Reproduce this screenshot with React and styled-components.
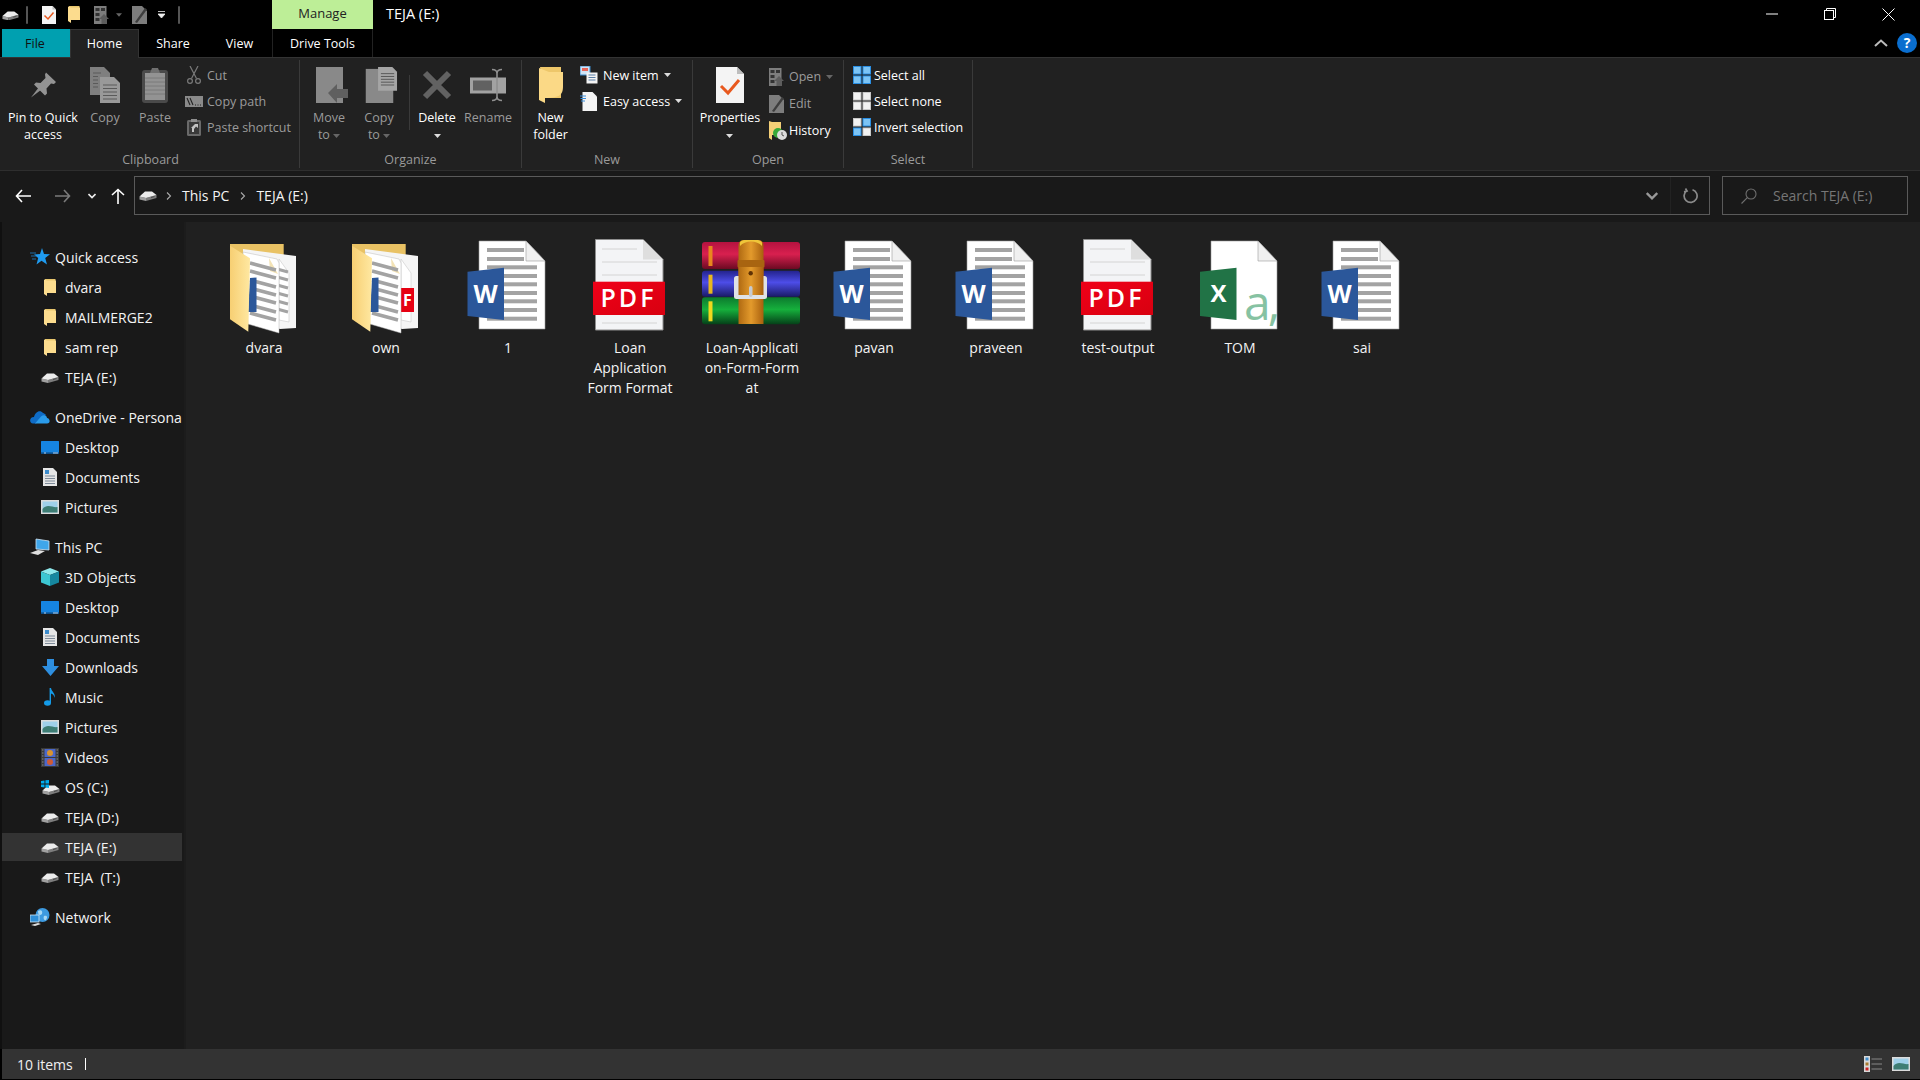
import React from 'react';
import styled, { createGlobalStyle } from 'styled-components';

// === tokens ===
const UI_FONT = '"Open Sans", "Noto Sans", "Liberation Sans", sans-serif';

const GlobalStyle = createGlobalStyle`
  html, body {
    margin: 0;
    padding: 0;
    background: #000;
  }
  * {
    box-sizing: border-box;
  }
  svg {
    display: block;
    flex-shrink: 0;
  }
`;

// === small icons ===
const DriveShape = () => (
  <>
    <path d="M0.5 7.5 L7 9 V12 L0.5 10.5 Z" fill="#a0a0a0" />
    <path d="M7 9 L17.5 6 V9 L7 12 Z" fill="#7d7d7d" />
    <path d="M0.5 7.5 L6 2.5 H13 L17.5 6 L7 9 Z" fill="#ececec" />
    <path d="M12 8.5 L15.5 7.5" stroke="#3c3c3c" strokeWidth="0.8" />
  </>
);

const Drive = ({ w = 18 }) => (
  <svg width={w} height={w * 0.67} viewBox="0 0 18 12">
    <DriveShape />
  </svg>
);

const SmallFolder = ({ w = 12, h = 17 }) => (
  <svg width={w} height={h} viewBox="0 0 12 17">
    <path d="M1 0 H11.5 V14 H1 Z" fill="#e9c76e" />
    <path d="M0 0.5 L3 1.5 H12 V14 H3 V17 L0 15 Z" fill="#fcdc8e" />
  </svg>
);

const PropertiesDoc = ({ w = 14, h = 18 }) => (
  <svg width={w} height={h} viewBox="0 0 28 36">
    <path d="M0 0 H21 L28 7 V36 H0 Z" fill="#f4f4f4" />
    <path d="M21 0 L28 7 H21 Z" fill="#bdbdbd" />
    <path d="M5 19 L12 26 L23 13" stroke="#e8591f" strokeWidth="3" fill="none" />
  </svg>
);

const OpenIcon = ({ w = 15, h = 18 }) => (
  <svg width={w} height={h} viewBox="0 0 15 18">
    <rect width="12.5" height="18" fill="#7d7d7d" />
    <rect x="1.5" y="2" width="4" height="3" fill="#333" />
    <rect x="7" y="2" width="4" height="3" fill="#333" />
    <rect x="1.5" y="7" width="4" height="3" fill="#333" />
    <rect x="1.5" y="12" width="4" height="3" fill="#333" />
    <path d="M10 8 L15 13 H13 V18 H7.5 V13 H5 Z" fill="#5d5d5d" />
  </svg>
);

const EditIcon = ({ w = 15, h = 18 }) => (
  <svg width={w} height={h} viewBox="0 0 15 18">
    <path d="M0 0 H10 L15 5 V18 H0 Z" fill="#7d7d7d" />
    <path d="M3 16 L13 2 L15 3.5 L5 17 Z" fill="#3e3e3e" />
  </svg>
);

const PinIcon = () => (
  <svg width="27" height="27" viewBox="0 0 27 27">
    <path d="M1 26 L9 15.5 L11.5 18 Z" fill="#8e8e8e" />
    <path d="M16 1 L26 10.5 L24 12.5 L21 12 L16.5 17 L17 22 L15 24 L4 13 L6 11 L10.5 11.5 L15.5 6.5 L15 3 Z" fill="#939393" />
  </svg>
);

const CopyLarge = () => (
  <svg width="30" height="36" viewBox="0 0 30 36">
    <path d="M0 0 H14 L20 6 V28 H0 Z" fill="#7f7f7f" />
    <path d="M10 10 H24 L30 16 V36 H10 Z" fill="#999" />
    <path d="M13 18 H27 M13 21.5 H27 M13 25 H27 M13 28.5 H27 M13 32 H27" stroke="#5a5a5a" strokeWidth="1.2" />
    <path d="M3 6 H11 M3 9.5 H8 M3 13 H8 M3 16.5 H8 M3 20 H8" stroke="#5a5a5a" strokeWidth="1.2" />
  </svg>
);

const PasteLarge = () => (
  <svg width="26" height="36" viewBox="0 0 26 36">
    <rect y="3" width="26" height="33" rx="3" fill="#4a4a4a" />
    <rect x="3" y="6" width="20" height="27" fill="#939393" />
    <path d="M3 11 H23 M3 15 H23 M3 19 H23 M3 23 H23 M3 27 H23" stroke="#7a7a7a" strokeWidth="1" />
    <path d="M8 6 L10 1 H16 L18 6 Z" fill="#707070" />
  </svg>
);

const ScissorsIcon = () => (
  <svg width="14" height="18" viewBox="0 0 14 18" fill="none" stroke="#7a7a7a" strokeWidth="1.2">
    <path d="M3 0 L9.5 12.5 M11 0 L4.5 12.5" />
    <circle cx="3" cy="15" r="2.4" />
    <circle cx="11" cy="15" r="2.4" />
  </svg>
);

const CopyPathIcon = () => (
  <svg width="18" height="11" viewBox="0 0 18 11">
    <rect width="18" height="11" fill="#8a8a8a" />
    <path d="M2 2 L5 9 M5 2 L8 9 M10 9 H11 M12.5 9 H13.5 M15 9 H16" stroke="#222" strokeWidth="1.1" />
  </svg>
);

const PasteShortcutIcon = () => (
  <svg width="14" height="17" viewBox="0 0 14 17">
    <rect y="1" width="14" height="16" rx="1.5" fill="#6a6a6a" />
    <rect x="2" y="3" width="10" height="12" fill="#3a3a3a" />
    <path d="M4 0 H10 V3 H4 Z" fill="#8f8f8f" />
    <path d="M5 13 V9 H4 L8 5 L11 5 V9 L9 7.5 L7 10 V13 Z" fill="#c4c4c4" />
  </svg>
);

const MoveToIcon = () => (
  <svg width="38" height="36" viewBox="-6 0 38 36">
    <rect width="27" height="36" fill="#898989" />
    <path d="M12 26 L21 17 V22 H32 V31 H21 V36 Z" fill="#5f5f5f" />
  </svg>
);

const CopyToIcon = () => (
  <svg width="37" height="38" viewBox="-4 0 37 38">
    <rect y="2" width="29" height="36" fill="#898989" />
    <path d="M13 0 H28 L33 5 V25 H13 Z" fill="#a5a5a5" />
    <path d="M16 7 H30 M16 10 H30 M16 13 H30 M16 16 H30 M16 19 H30" stroke="#555" strokeWidth="1" />
  </svg>
);

const DeleteIcon = () => (
  <svg width="30" height="30" viewBox="0 0 30 30">
    <path d="M3 3 L27 27 M27 3 L3 27" stroke="#626262" strokeWidth="6" />
  </svg>
);

const RenameIcon = () => (
  <svg width="36" height="33" viewBox="0 0 36 33">
    <rect y="9" width="36" height="16" fill="#a2a2a2" />
    <rect x="3" y="12" width="19" height="10" fill="#616161" />
    <path d="M22 1 C25 1 27 2 27 5 V28 C27 31 25 32 22 32 M32 1 C29 1 27 2 27 5 M32 32 C29 32 27 31 27 28" stroke="#8f8f8f" strokeWidth="1.6" fill="none" />
  </svg>
);

const NewFolderIcon = () => (
  <svg width="24" height="36" viewBox="0 0 24 36">
    <path d="M1 0 H22 V31 H6 Z" fill="#eec76a" />
    <path d="M0 1 L10 5 H24 V19 C24 27 22 31 6 31 V36 L0 33 Z" fill="#fbd986" />
  </svg>
);

const NewItemIcon = () => (
  <svg width="18" height="18" viewBox="0 0 18 18">
    <rect width="10" height="9" fill="#cfe4f7" stroke="#3d8ccc" />
    <rect x="2" y="2" width="6" height="3" fill="#e8665a" />
    <rect x="6.5" y="6.5" width="11" height="11" fill="#f4f4f4" />
    <path d="M8.5 9 H15.5 M8.5 11.5 H15.5 M8.5 14 H15.5" stroke="#5b7fa6" strokeWidth="1" />
  </svg>
);

const EasyAccessIcon = () => (
  <svg width="17" height="19" viewBox="0 0 17 19">
    <path d="M2.5 0 H12.5 L17 4.5 V19 H2.5 Z" fill="#f4f4f4" />
    <path d="M0 4 H6 M0.5 6.5 H6 M1 9 H5" stroke="#3a8edb" strokeWidth="1" />
  </svg>
);

const HistoryIcon = () => (
  <svg width="18" height="19" viewBox="0 0 18 19">
    <path d="M0 0 L3 1 H12 V14 H3 V19 L0 17 Z" fill="#f4cf77" />
    <circle cx="9" cy="12" r="5" fill="#38a838" />
    <circle cx="13" cy="14" r="5" fill="#dcdcdc" />
    <path d="M13 11 V14 L15 15" stroke="#555" fill="none" />
  </svg>
);

const SelectGrid = ({ cells, w = 18 }) => (
  <svg width={w} height={w} viewBox="0 0 18 18">
    {[[0, 0], [9.5, 0], [0, 9.5], [9.5, 9.5]].map(([x, y], i) => (
      <rect key={i} x={x + 0.5} y={y + 0.5} width="7.5" height="7.5" fill={cells[i]} stroke={cells[i] === '#f2f2f2' ? '#c8c8c8' : '#2a8fe4'} />
    ))}
  </svg>
);

// === nav tree icons ===
const StarIcon = () => (
  <svg width="20" height="18" viewBox="0 0 20 18">
    <path d="M12 0 L14 6 L20 6.2 L15.2 10 L17 16.5 L11.5 12.8 L6.5 16.5 L8.2 10 L4 6.4 L10 6 Z" fill="#1f9bf0" />
    <path d="M0 5 H6 M1 8 H6 M2 11 H6" stroke="#1f6fa8" strokeWidth="1" />
  </svg>
);

const CloudIcon = () => (
  <svg width="20" height="14" viewBox="0 0 20 14">
    <path d="M3 13.5 C-1 13.5 -1 7 4 7 C5 2 10 -1 13 3 C14 3.5 15 3.5 16 5 L6 13.5 Z" fill="#0f6cc6" />
    <path d="M5 13.5 L11 6.5 C14 4 17 6 17 8 C20 8 21 13.5 17 13.5 Z" fill="#2a9bea" />
  </svg>
);

const DesktopIcon = () => (
  <svg width="18" height="13" viewBox="0 0 18 13">
    <rect width="18" height="13" rx="0.5" fill="#1684e0" />
    <rect x="0" y="11.4" width="18" height="1.6" fill="#0c4f8a" />
    <path d="M3 12 H5 M12 12 H17" stroke="#dfefff" strokeWidth="0.8" />
  </svg>
);

const DocsIcon = () => (
  <svg width="14" height="18" viewBox="0 0 14 18">
    <path d="M0 0 H10 L14 4 V18 H0 Z" fill="#e6e6e6" />
    <path d="M2 8 H12 M2 10.5 H12 M2 13 H12 M2 15.5 H12" stroke="#7d8a99" strokeWidth="1" />
    <path d="M2 2 H6 V6 H2 Z" fill="#3d8ccc" />
  </svg>
);

const PicturesIcon = () => (
  <svg width="18" height="14" viewBox="0 0 18 14">
    <rect width="18" height="14" fill="#dcdcdc" />
    <rect x="1.5" y="1.5" width="15" height="11" fill="#9fd0ea" />
    <path d="M1.5 9 C6 3 12 8 16.5 7 V12.5 H1.5 Z" fill="#3e7d74" />
  </svg>
);

const PcIcon = () => (
  <svg width="20" height="18" viewBox="0 0 20 18">
    <path d="M6 1 L19 3 V12 L6 11 Z" fill="#3fa6ea" stroke="#cfe5f5" strokeWidth="0.8" />
    <path d="M0 15 L8 12 L15 13 L8 17 Z" fill="#dfdfdf" />
  </svg>
);

const CubeIcon = () => (
  <svg width="18" height="18" viewBox="0 0 18 18">
    <path d="M9 0 L18 3.5 L9 7 L0 3.5 Z" fill="#8ee8ec" />
    <path d="M0 3.5 L9 7 V18 L0 14.5 Z" fill="#3cc6d2" />
    <path d="M18 3.5 L9 7 V18 L18 14.5 Z" fill="#16879f" />
  </svg>
);

const DownloadIcon = () => (
  <svg width="17" height="17" viewBox="0 0 17 17">
    <path d="M5 0 H12 V7 H17 L8.5 17 L0 7 H5 Z" fill="#2e8fe0" />
  </svg>
);

const MusicIcon = () => (
  <svg width="12" height="18" viewBox="0 0 12 18">
    <ellipse cx="3.5" cy="15" rx="3.5" ry="2.8" fill="#149be8" />
    <path d="M5.6 15 V0 H7 C7.5 4 12 5 10.5 10 C10 6.5 8.5 6 7 5.5 V15 Z" fill="#149be8" />
  </svg>
);

const VideosIcon = () => (
  <svg width="18" height="19" viewBox="0 0 18 19">
    <rect width="18" height="19" fill="#3a3a3a" />
    <path d="M1 2 H2.5 M1 5 H2.5 M1 8 H2.5 M1 11 H2.5 M1 14 H2.5 M1 17 H2.5 M15.5 2 H17 M15.5 5 H17 M15.5 8 H17 M15.5 11 H17 M15.5 14 H17 M15.5 17 H17" stroke="#888" strokeWidth="1" />
    <rect x="3.5" y="1" width="11" height="8" fill="#4c68c8" />
    <rect x="3.5" y="10" width="11" height="8" fill="#4c68c8" />
    <circle cx="9" cy="5" r="3" fill="#d99330" />
    <circle cx="9" cy="14" r="3" fill="#cf5b36" />
  </svg>
);

const OsDriveIcon = () => (
  <svg width="19" height="15" viewBox="0 0 19 15">
    <g transform="translate(1 3)"><DriveShape /></g>
    <path d="M0 1 L3.5 0.4 V3.5 H0 Z M4.4 0.3 L8 0 V3.5 H4.4 Z M0 4.4 H3.5 V7.5 L0 7 Z M4.4 4.4 H8 V8 L4.4 7.6 Z" fill="#00adef" />
  </svg>
);

const NetworkIcon = () => (
  <svg width="20" height="18" viewBox="0 0 20 18">
    <circle cx="12.5" cy="7" r="7" fill="#3d9ae0" />
    <path d="M8 3 C11 1 13 3 12 6 C10 8 8 7 8 3 Z M14 8 C17 7 18 9 16 12 C14 13 13 10 14 8 Z" fill="#a8d8f5" />
    <rect x="0" y="7" width="9" height="7" fill="#2f8fd8" stroke="#cfe5f5" strokeWidth="0.8" />
    <path d="M1 17 L8 15 L11 16 L5 18 Z" fill="#dfdfdf" />
  </svg>
);

// === file icons, 96x96 tile artwork ===
const GRAY_LINE_ROWS = [29.3, 38, 46.3, 55, 63.3, 72, 80.7];

const OfficePage = ({ children }) => (
  <>
    <path d="M19 3 H66 L85 23 V91 H19 Z" fill="#fff" stroke="#9a9a9a" strokeWidth="0.6" />
    <path d="M66 3 L85 23 H66 Z" fill="#f0f0f0" stroke="#9a9a9a" strokeWidth="0.6" />
    {children}
  </>
);

const WordFile = () => (
  <svg width="96" height="96" viewBox="0 0 96 96">
    <OfficePage>
      <path d="M27 10 H64 V14 H27 Z M27 19 H64 V23 H27 Z" fill="#a3a3a3" />
      {GRAY_LINE_ROWS.map(y => (
        <rect key={y} x="27" y={y - 2} width="50" height="4" fill="#a3a3a3" />
      ))}
    </OfficePage>
    <path d="M7.5 33.7 L44 29.7 V82 L7.5 78 Z" fill="#2b579a" />
    <text x="25.7" y="65" textAnchor="middle" fontFamily={UI_FONT} fontWeight="700" fontSize="25" fill="#fff">W</text>
  </svg>
);

const ExcelFile = () => (
  <svg width="96" height="96" viewBox="0 0 96 96">
    <OfficePage>
      <text x="52" y="82" fontFamily={UI_FONT} fontWeight="400" fontSize="48" letterSpacing="-3" fill="#86c2a2">a,</text>
    </OfficePage>
    <path d="M8 33.7 L44.5 29.7 V82 L8 78 Z" fill="#217346" />
    <text x="26.5" y="64" textAnchor="middle" fontFamily={UI_FONT} fontWeight="700" fontSize="24" fill="#fff">X</text>
  </svg>
);

const PdfFile = () => (
  <svg width="96" height="96" viewBox="1 0 96 96">
    <defs>
      <linearGradient id="pdfBand" x1="0" y1="0" x2="1" y2="1">
        <stop offset="0" stopColor="#f00018" />
        <stop offset="1" stopColor="#d80010" />
      </linearGradient>
    </defs>
    <path d="M14.5 1.5 H62 L82 21.5 V92 H14.5 Z" fill="#f3f4f6" stroke="#8e8e8e" strokeWidth="1" />
    <path d="M62 1.5 L82 21.5 H62 Z" fill="#dedede" />
    <path d="M21 11 H56 M21 24 H76 M21 37 H76 M21 85 H76" stroke="#d4d4d4" strokeWidth="1" />
    <rect x="12" y="43.7" width="72" height="33.3" fill="url(#pdfBand)" />
    <text x="47.5" y="69" textAnchor="middle" fontFamily={UI_FONT} fontWeight="600" fontSize="25" letterSpacing="3" fill="#fff">PDF</text>
  </svg>
);

const RarBook = ({ y, h, id, colors, strip }) => (
  <>
    <defs>
      <linearGradient id={id} x1="0" y1="0" x2="0" y2="1">
        <stop offset="0" stopColor={colors[0]} />
        <stop offset="0.45" stopColor={colors[1]} />
        <stop offset="1" stopColor={colors[2]} />
      </linearGradient>
    </defs>
    <rect x="-1" y={y} width="98" height={h} rx="3" fill={`url(#${id})`} />
    <rect x="5.5" y={y + 4} width="4" height={h - 7} fill={strip} />
  </>
);

const RarFile = () => (
  <svg width="96" height="96" viewBox="1 0 96 96" style={{ overflow: 'visible' }}>
    <defs>
      <linearGradient id="rarBelt" x1="0" y1="0" x2="1" y2="0">
        <stop offset="0" stopColor="#b06a12" />
        <stop offset="0.5" stopColor="#e39a2c" />
        <stop offset="1" stopColor="#a8600e" />
      </linearGradient>
    </defs>
    <RarBook y={4} h={27} id="rarRed" colors={['#b5123f', '#d8204f', '#6c0a22']} strip="#e8861e" />
    <RarBook y={32.7} h={26} id="rarBlue" colors={['#23238c', '#4d4de8', '#1a1a68']} strip="#e8b81e" />
    <RarBook y={59.3} h={27} id="rarGreen" colors={['#0c7a2e', '#16b03c', '#054018']} strip="#f0d81e" />
    <path d="M35.5 8 C35.5 3 38 2 42 2 H54 C58 2 60.5 3 60.5 8 V86 H35.5 Z" fill="url(#rarBelt)" />
    <path d="M37 8 C42 2 54 2 59 8 V5 C59 3 56 2 54 2 H42 C40 2 37 3 37 5 Z" fill="#efc63a" />
    <rect x="34.5" y="22" width="27" height="7.5" rx="1" fill="#a86410" />
    <rect x="31" y="38" width="33" height="23" rx="2.5" fill="#dfe2e6" />
    <rect x="35.5" y="29" width="25" height="28" fill="url(#rarBelt)" />
    <circle cx="47.7" cy="35.3" r="2.2" fill="#5f3205" />
    <rect x="46" y="48" width="3.5" height="11" rx="1.7" fill="#c6cad0" />
  </svg>
);

const FolderFile = ({ flap, letter }) => (
  <svg width="96" height="96" viewBox="0 0 96 96">
    <defs>
      <linearGradient id={`flap${letter}`} x1="0" y1="0" x2="1" y2="0">
        <stop offset="0" stopColor="#f7cf73" />
        <stop offset="1" stopColor="#ffe8a1" />
      </linearGradient>
    </defs>
    <path d="M14 6 H67.7 V30 H14 Z" fill="#e9c264" />
    <path d="M27 11 L80 18 V90 L64 91 L27 80 Z" fill="#f5f5f5" />
    <path d="M63 21 L73 35 V84 L63 82 Z" fill="#fff" stroke="#c9c9c9" strokeWidth="0.6" />
    {letter === 'W' &&
      [36, 44, 52, 60, 68, 76].map(y => <path key={y} d={`M61 ${y - 5} L72 ${y - 2}`} stroke="#a3a3a3" strokeWidth="3" />)}
    {flap === 'pdf' && <rect x="61" y="50" width="15" height="24" fill="#e60012" />}
    {flap === 'pdf' && <text x="65" y="68" fontFamily={UI_FONT} fontWeight="700" fontSize="16" fill="#fff">F</text>}
    <path d="M27 14 L61 21 L63 25 V95 L32 86 Z" fill="#fff" stroke="#bbb" strokeWidth="0.5" />
    <path d="M53 20 L62 36 L54 33 Z" fill="#f3e3b6" />
    {[27, 35, 44, 52, 60, 69, 77].map(y => (
      <path key={y} d={`M34 ${y - 2} L60 ${y + 5}`} stroke="#a3a3a3" strokeWidth="3.5" />
    ))}
    <path d="M34 40 L40.5 39.5 V74 L32 74 Z" fill="#2b579a" />
    <path d="M14 7.7 L34 20.3 L32.3 93.7 L14 81.3 Z" fill={`url(#flap${letter})`} />
  </svg>
);

// === data ===
const NAV_TREE = [
  [
    { label: 'Quick access', icon: <StarIcon /> },
    { label: 'dvara', level: 1, icon: <SmallFolder /> },
    { label: 'MAILMERGE2', level: 1, icon: <SmallFolder /> },
    { label: 'sam rep', level: 1, icon: <SmallFolder /> },
    { label: 'TEJA (E:)', level: 1, icon: <Drive /> },
  ],
  [
    { label: 'OneDrive - Personal', icon: <CloudIcon /> },
    { label: 'Desktop', level: 1, icon: <DesktopIcon /> },
    { label: 'Documents', level: 1, icon: <DocsIcon /> },
    { label: 'Pictures', level: 1, icon: <PicturesIcon /> },
  ],
  [
    { label: 'This PC', icon: <PcIcon /> },
    { label: '3D Objects', level: 1, icon: <CubeIcon /> },
    { label: 'Desktop', level: 1, icon: <DesktopIcon /> },
    { label: 'Documents', level: 1, icon: <DocsIcon /> },
    { label: 'Downloads', level: 1, icon: <DownloadIcon /> },
    { label: 'Music', level: 1, icon: <MusicIcon /> },
    { label: 'Pictures', level: 1, icon: <PicturesIcon /> },
    { label: 'Videos', level: 1, icon: <VideosIcon /> },
    { label: 'OS (C:)', level: 1, icon: <OsDriveIcon /> },
    { label: 'TEJA (D:)', level: 1, icon: <Drive /> },
    { label: 'TEJA (E:)', level: 1, icon: <Drive />, selected: true },
    { label: 'TEJA\u00a0 (T:)', level: 1, icon: <Drive /> },
  ],
  [{ label: 'Network', icon: <NetworkIcon /> }],
];

const FILES = [
  { lines: ['dvara'], icon: <FolderFile letter="W" /> },
  { lines: ['own'], icon: <FolderFile flap="pdf" letter="P" /> },
  { lines: ['1'], icon: <WordFile /> },
  { lines: ['Loan', 'Application', 'Form Format'], icon: <PdfFile /> },
  { lines: ['Loan-Applicati', 'on-Form-Form', 'at'], icon: <RarFile /> },
  { lines: ['pavan'], icon: <WordFile /> },
  { lines: ['praveen'], icon: <WordFile /> },
  { lines: ['test-output'], icon: <PdfFile /> },
  { lines: ['TOM'], icon: <ExcelFile /> },
  { lines: ['sai'], icon: <WordFile /> },
];

const BLUE = '#7cc4f5';
const WHITE = '#f2f2f2';

const Caret = ({ color = '#ddd', w = 7 }) => (
  <svg width={w} height="4" viewBox="0 0 7 4">
    <path d="M0 0 H7 L3.5 4 Z" fill={color} />
  </svg>
);

const Chevron = ({ color = '#aaa', dir = 'right', size = 8 }) => (
  <svg width={size} height={size} viewBox="0 0 8 8" fill="none" stroke={color} strokeWidth="1.1">
    {dir === 'right' ? <path d="M2 0.5 L5.5 4 L2 7.5" /> : <path d="M0.5 2 L4 5.5 L7.5 2" strokeWidth="1.6" />}
  </svg>
);

const App = () => (
  <>
    <GlobalStyle />
    <Window>
      <TitleBar>
        <QuickBar>
          <QuickItem $ml={2}><Drive w={17} /></QuickItem>
          <QuickSep $ml={7} />
          <QuickItem $ml={14}><PropertiesDoc /></QuickItem>
          <QuickItem $ml={12}><SmallFolder /></QuickItem>
          <QuickItem $ml={14}><OpenIcon /></QuickItem>
          <QuickItem $ml={7}><Caret color="#666" w={6} /></QuickItem>
          <QuickItem $ml={10}><EditIcon /></QuickItem>
          <QuickItem $ml={11}>
            <svg width="7" height="7" viewBox="0 0 7 7">
              <path d="M0 0.5 H7 M0 3 H7 L3.5 7 L0 3 Z" stroke="#eee" strokeWidth="0.8" fill="#eee" />
            </svg>
          </QuickItem>
          <QuickSep $ml={13} />
        </QuickBar>
        <ManageTab>Manage</ManageTab>
        <WindowTitle>TEJA (E:)</WindowTitle>
        <WindowButtons>
          <WindowButton>
            <svg width="12" height="12" viewBox="0 0 12 12"><path d="M0 6 H12" stroke="#fff" /></svg>
          </WindowButton>
          <WindowButton>
            <svg width="12" height="12" viewBox="0 0 12 12" fill="none" stroke="#fff">
              <rect x="0.5" y="2.5" width="9" height="9" />
              <path d="M2.5 2.5 V0.5 H11.5 V9.5 H9.5" />
            </svg>
          </WindowButton>
          <WindowButton>
            <svg width="13" height="13" viewBox="0 0 13 13" stroke="#fff"><path d="M0.5 0.5 L12.5 12.5 M12.5 0.5 L0.5 12.5" /></svg>
          </WindowButton>
        </WindowButtons>
      </TitleBar>

      <TabRow>
        <FileTab>File</FileTab>
        <HomeTab>Home</HomeTab>
        <PlainTab $w={68}>Share</PlainTab>
        <PlainTab $w={65}>View</PlainTab>
        <ToolsTab>Drive Tools</ToolsTab>
        <HelpCluster>
          <svg width="14" height="8" viewBox="0 0 14 8" fill="none" stroke="#bbb" strokeWidth="2"><path d="M1 7 L7 1.5 L13 7" /></svg>
          <HelpBadge>?</HelpBadge>
        </HelpCluster>
      </TabRow>

      <Ribbon>
        <Group $w={298}>
          <GroupBody>
            <LargeButton $w={82} $active><PinIcon /><span>Pin to Quick<br />access</span></LargeButton>
            <LargeButton $w={42}><CopyLarge /><span>Copy</span></LargeButton>
            <LargeButton $w={58}><PasteLarge /><span>Paste</span></LargeButton>
            <SmallColumn>
              <SmallRow><SmallIcon $center><ScissorsIcon /></SmallIcon>Cut</SmallRow>
              <SmallRow><SmallIcon $center><CopyPathIcon /></SmallIcon>Copy path</SmallRow>
              <SmallRow><SmallIcon $center><PasteShortcutIcon /></SmallIcon>Paste shortcut</SmallRow>
            </SmallColumn>
          </GroupBody>
          <GroupLabel>Clipboard</GroupLabel>
        </Group>

        <Group $w={222}>
          <GroupBody $pad={4}>
            <LargeButton $w={50}><MoveToIcon /><span>Move<br />to <Caret color="#666" /></span></LargeButton>
            <LargeButton $w={50}><CopyToIcon /><span>Copy<br />to <Caret color="#666" /></span></LargeButton>
            <RibbonDivider />
            <LargeButton $w={50} $active $ml={2}><DeleteIcon /><span>Delete<br /><Caret color="#ddd" /></span></LargeButton>
            <LargeButton $w={52}><RenameIcon /><span>Rename</span></LargeButton>
          </GroupBody>
          <GroupLabel>Organize</GroupLabel>
        </Group>

        <Group $w={171}>
          <GroupBody $pad={6}>
            <LargeButton $w={45} $active><NewFolderIcon /><span>New<br />folder</span></LargeButton>
            <SmallColumn $ml={7}>
              <SmallRow $active><SmallIcon $w={23}><NewItemIcon /></SmallIcon>New item <CaretGap><Caret /></CaretGap></SmallRow>
              <SmallRow $active><SmallIcon $w={23}><EasyAccessIcon /></SmallIcon>Easy access <CaretGap><Caret /></CaretGap></SmallRow>
            </SmallColumn>
          </GroupBody>
          <GroupLabel>New</GroupLabel>
        </Group>

        <Group $w={151}>
          <GroupBody $pad={5}>
            <LargeButton $w={64} $active><PropertiesDoc w={28} h={36} /><span>Properties<br /><Caret /></span></LargeButton>
            <SmallColumn $ml={7} $top={3}>
              <SmallRow $h={27}><SmallIcon $w={20}><OpenIcon /></SmallIcon>Open <CaretGap><Caret color="#666" /></CaretGap></SmallRow>
              <SmallRow $h={27}><SmallIcon $w={20}><EditIcon /></SmallIcon>Edit</SmallRow>
              <SmallRow $h={27} $active><SmallIcon $w={20}><HistoryIcon /></SmallIcon>History</SmallRow>
            </SmallColumn>
          </GroupBody>
          <GroupLabel>Open</GroupLabel>
        </Group>

        <Group $w={129}>
          <GroupBody $pad={9}>
            <SmallColumn>
              <SmallRow $active><SmallIcon $w={21}><SelectGrid cells={[BLUE, BLUE, BLUE, BLUE]} /></SmallIcon>Select all</SmallRow>
              <SmallRow $active><SmallIcon $w={21}><SelectGrid cells={[WHITE, WHITE, WHITE, WHITE]} /></SmallIcon>Select none</SmallRow>
              <SmallRow $active><SmallIcon $w={21}><SelectGrid cells={[WHITE, BLUE, BLUE, WHITE]} /></SmallIcon>Invert selection</SmallRow>
            </SmallColumn>
          </GroupBody>
          <GroupLabel>Select</GroupLabel>
        </Group>
      </Ribbon>

      <AddressRow>
        <NavCluster>
          <NavItem $ml={15}>
            <svg width="16" height="14" viewBox="0 0 16 14" fill="none" stroke="#fff" strokeWidth="1.6"><path d="M16 7 H1.5 M7 1 L1.5 7 L7 13" /></svg>
          </NavItem>
          <NavItem $ml={24}>
            <svg width="16" height="14" viewBox="0 0 16 14" fill="none" stroke="#7b7b7b" strokeWidth="1.6"><path d="M0 7 H14.5 M9 1 L14.5 7 L9 13" /></svg>
          </NavItem>
          <NavItem $ml={17}><Chevron dir="down" color="#eee" /></NavItem>
          <NavItem $ml={15}>
            <svg width="14" height="16" viewBox="0 0 14 16" fill="none" stroke="#fff" strokeWidth="1.6"><path d="M7 16 V1.5 M1 7 L7 1.5 L13 7" /></svg>
          </NavItem>
        </NavCluster>
        <AddressBox>
          <Drive />
          <Crumb $muted $ml={8}><Chevron /></Crumb>
          <Crumb $ml={9}>This PC</Crumb>
          <Crumb $muted $ml={10}><Chevron /></Crumb>
          <Crumb $ml={9}>TEJA (E:)</Crumb>
          <AddressTools>
            <Chevron dir="down" color="#999" size={12} />
            <ToolDivider />
            <svg width="16" height="16" viewBox="0 0 16 16" fill="none" stroke="#8a8a8a" strokeWidth="1.7">
              <path d="M4 2.5 A6.5 6.5 0 1 0 9.5 1.7" />
              <path d="M2.5 0.5 L4 3 L1 3.8" />
            </svg>
          </AddressTools>
        </AddressBox>
        <SearchBox>
          <svg width="16" height="16" viewBox="0 0 16 16" fill="none" stroke="#6f6f6f" strokeWidth="1.1">
            <circle cx="10" cy="6" r="5" />
            <path d="M6.3 9.7 L0.5 15.5" />
          </svg>
          <SearchHint>Search TEJA (E:)</SearchHint>
        </SearchBox>
      </AddressRow>

      <Body>
        <NavPane>
          {NAV_TREE.map((group, i) => (
            <NavGroup key={i}>
              {group.map(item => (
                <NavRow key={item.label + (item.selected ? 's' : '')} $level={item.level} $selected={item.selected}>
                  <NavIcon $level={item.level}>{item.icon}</NavIcon>
                  <NavText>{item.label}</NavText>
                </NavRow>
              ))}
            </NavGroup>
          ))}
        </NavPane>
        <Splitter />
        <FileArea>
          {FILES.map(file => (
            <FileTile key={file.lines.join('')}>
              {file.icon}
              <FileName>
                {file.lines.map(line => <span key={line}>{line}</span>)}
              </FileName>
            </FileTile>
          ))}
        </FileArea>
      </Body>

      <StatusBar>
        <StatusText>10 items</StatusText>
        <StatusCursor />
        <ViewToggles>
          <svg width="18" height="16" viewBox="0 0 18 16">
            <rect width="6" height="16" fill="#d8d8d8" />
            <rect x="1.5" y="1.5" width="3" height="3" fill="#3d8ccc" />
            <rect x="1.5" y="6.5" width="3" height="3" fill="#a87a2e" />
            <rect x="1.5" y="11.5" width="3" height="3" fill="#c22" />
            <path d="M7.5 3 H18 M7.5 8 H18 M7.5 13 H18" stroke="#888" strokeWidth="1.2" />
          </svg>
          <svg width="18" height="14" viewBox="0 0 18 14">
            <rect width="18" height="14" fill="#dcdcdc" />
            <rect x="1.5" y="1.5" width="15" height="11" fill="#9fd0ea" />
            <path d="M1.5 9 C6 3 12 8 16.5 7 V12.5 H1.5 Z" fill="#3e7d74" />
          </svg>
        </ViewToggles>
      </StatusBar>
    </Window>
  </>
);

export default App;

// === layout ===
const Window = styled.div`
  display: flex;
  flex-direction: column;
  width: 1920px;
  height: 1080px;
  overflow: hidden;
  background: #000;
  color: #fff;
  font-family: ${UI_FONT};
  font-size: 14px;
`;

const TitleBar = styled.header`
  display: flex;
  align-items: flex-start;
  height: 29px;
  flex-shrink: 0;
`;

const QuickBar = styled.div`
  display: flex;
  align-items: center;
  width: 272px;
  height: 29px;
`;

const QuickItem = styled.span`
  display: flex;
  margin-left: ${p => p.$ml}px;
`;

const QuickSep = styled.span`
  display: block;
  width: 2px;
  height: 18px;
  margin-left: ${p => p.$ml}px;
  background: #555;
  border-radius: 1px;
`;

const ManageTab = styled.div`
  width: 101px;
  height: 29px;
  line-height: 27px;
  text-align: center;
  background: #bdee97;
  color: #222;
  font-size: 13px;
`;

const WindowTitle = styled.div`
  margin-left: 13px;
  line-height: 27px;
  font-size: 14.5px;
`;

const WindowButtons = styled.div`
  display: flex;
  margin-left: auto;
  padding-right: 3px;
`;

const WindowButton = styled.div`
  display: flex;
  align-items: center;
  justify-content: center;
  width: 58px;
  height: 28px;
`;

const TabRow = styled.nav`
  display: flex;
  height: 29px;
  flex-shrink: 0;
  padding-left: 2px;
  border-bottom: 1px solid #333;
  font-size: 12.5px;
`;

const FileTab = styled.div`
  width: 68px;
  height: 28px;
  line-height: 29px;
  text-align: center;
  background: #00a0b0;
  color: #111;
  padding-right: 2px;
`;

const HomeTab = styled.div`
  width: 69px;
  height: 29px;
  line-height: 28px;
  text-align: center;
  background: #212121;
  border: 1px solid #333;
  border-bottom: none;
`;

const PlainTab = styled.div`
  width: ${p => p.$w}px;
  line-height: 30px;
  text-align: center;
`;

const ToolsTab = styled.div`
  width: 101px;
  line-height: 30px;
  text-align: center;
  border-left: 1px solid #222;
  border-right: 1px solid #222;
`;

const HelpCluster = styled.div`
  display: flex;
  align-items: center;
  gap: 9px;
  margin-left: auto;
  padding-right: 3px;
`;

const HelpBadge = styled.div`
  width: 20px;
  height: 20px;
  border-radius: 50%;
  line-height: 20px;
  text-align: center;
  background: #0a6ecf;
  color: #fff;
  font-size: 14px;
  font-weight: 700;
`;

const Ribbon = styled.section`
  display: flex;
  height: 113px;
  flex-shrink: 0;
  padding: 2px 0 2px 2px;
  background: #212121;
  border-bottom: 1px solid #2e2e2e;
  font-size: 12.5px;
  line-height: 17px;
`;

const Group = styled.div`
  display: flex;
  flex-direction: column;
  width: ${p => p.$w}px;
  border-right: 1px solid #3a3a3a;
`;

const GroupBody = styled.div`
  display: flex;
  flex: 1;
  min-height: 0;
  padding-left: ${p => p.$pad || 0}px;
`;

const GroupLabel = styled.div`
  height: 15px;
  line-height: 14px;
  text-align: center;
  color: #9a9a9a;
  font-size: 12.5px;
`;

const LargeButton = styled.div`
  display: flex;
  flex-direction: column;
  align-items: center;
  width: ${p => p.$w}px;
  margin-left: ${p => p.$ml || 0}px;
  color: ${p => (p.$active ? '#fff' : '#9b9b9b')};
  text-align: center;
  white-space: nowrap;

  > svg {
    height: 36px;
    margin: 7px 0 6px;
  }

  > span svg {
    display: inline-block;
    vertical-align: middle;
  }
`;

const RibbonDivider = styled.div`
  width: 1px;
  height: 55px;
  margin: 15px 0 0 5px;
  background: #3a3a3a;
`;

const SmallColumn = styled.div`
  display: flex;
  flex-direction: column;
  margin-left: ${p => p.$ml || 0}px;
  padding-top: ${p => p.$top || 2}px;
`;

const SmallRow = styled.div`
  display: flex;
  align-items: center;
  height: ${p => p.$h || 26}px;
  white-space: nowrap;
  color: ${p => (p.$active ? '#fff' : '#9b9b9b')};
`;

const SmallIcon = styled.span`
  display: flex;
  align-items: center;
  justify-content: ${p => (p.$center ? 'center' : 'flex-start')};
  width: ${p => p.$w || 23}px;
  padding-right: ${p => (p.$center ? 4 : 0)}px;
`;

const CaretGap = styled.span`
  margin-left: 5px;
`;

const AddressRow = styled.div`
  display: flex;
  height: 51px;
  flex-shrink: 0;
  padding: 5px 12px 7px 0;
  background: #191919;
`;

const NavCluster = styled.div`
  display: flex;
  align-items: center;
  width: 134px;
`;

const NavItem = styled.span`
  display: flex;
  margin-left: ${p => p.$ml}px;
`;

const AddressBox = styled.div`
  display: flex;
  align-items: center;
  flex: 1;
  padding-left: 4px;
  border: 1px solid #5a5a5a;
  font-size: 14px;
`;

const Crumb = styled.span`
  margin-left: ${p => p.$ml}px;
  color: ${p => (p.$muted ? '#aaa' : '#f4f4f4')};
`;

const AddressTools = styled.div`
  display: flex;
  align-items: center;
  align-self: stretch;
  margin-left: auto;
  padding-right: 10px;
`;

const ToolDivider = styled.span`
  align-self: stretch;
  width: 1px;
  margin: 0 12px 0 12px;
  background: #222;
`;

const SearchBox = styled.div`
  display: flex;
  align-items: center;
  width: 186px;
  margin-left: 12px;
  padding-left: 18px;
  border: 1px solid #5a5a5a;
`;

const SearchHint = styled.span`
  margin-left: 16px;
  color: #767676;
  font-size: 14px;
  white-space: nowrap;
`;

const Body = styled.main`
  display: flex;
  flex: 1;
  min-height: 0;
  padding-left: 2px;
  background: #101010;
`;

const NavPane = styled.aside`
  display: flex;
  flex-direction: column;
  gap: 12px;
  width: 182px;
  padding: 21px 2px 0 0;
  overflow: hidden;
  background: #191919;
`;

const NavGroup = styled.div`
  display: flex;
  flex-direction: column;
  gap: 2px;
`;

const NavRow = styled.div`
  display: flex;
  align-items: center;
  height: 28px;
  padding-left: ${p => (p.$level ? 39 : 28)}px;
  background: ${p => (p.$selected ? '#333' : 'transparent')};
  white-space: nowrap;
  overflow: hidden;
`;

const NavIcon = styled.span`
  display: flex;
  justify-content: center;
  width: ${p => (p.$level ? 18 : 20)}px;
  margin-right: ${p => (p.$level ? 6 : 5)}px;
`;

const NavText = styled.span`
  color: #f4f4f4;
`;

const Splitter = styled.div`
  width: 2px;
  background: #1c1c1c;
`;

const FileArea = styled.div`
  display: flex;
  align-items: flex-start;
  flex: 1;
  padding: 16px 0 0 17px;
  background: #202020;
`;

const FileTile = styled.article`
  display: flex;
  flex-direction: column;
  align-items: center;
  width: 122px;
`;

const FileName = styled.div`
  display: flex;
  flex-direction: column;
  align-items: center;
  margin-top: 4px;
  line-height: 20px;
  color: #f4f4f4;
  white-space: nowrap;
`;

const StatusBar = styled.footer`
  display: flex;
  align-items: center;
  height: 30px;
  flex-shrink: 0;
  margin-left: 2px;
  margin-bottom: 1px;
  padding-left: 15px;
  background: #333;
`;

const StatusText = styled.span`
  color: #f0f0f0;
`;

const StatusCursor = styled.span`
  width: 1px;
  height: 12px;
  margin-left: 12px;
  background: #fff;
`;

const ViewToggles = styled.div`
  display: flex;
  align-items: center;
  gap: 10px;
  margin-left: auto;
  padding-right: 10px;
`;
